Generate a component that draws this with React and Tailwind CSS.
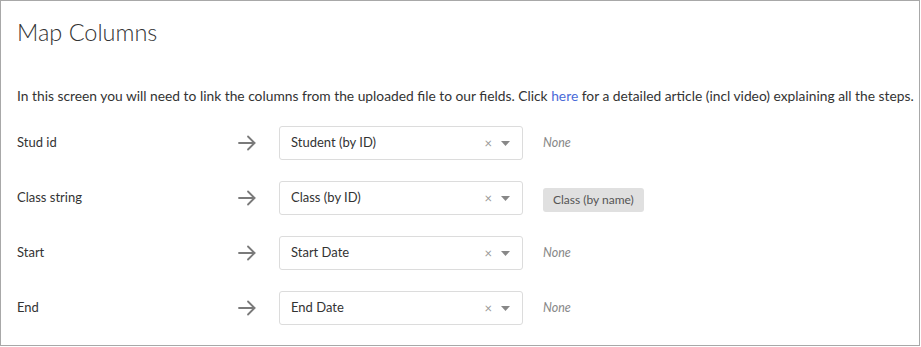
import React from "react";

const rows = [
  { label: "Stud id", value: "Student (by ID)", note: null },
  { label: "Class string", value: "Class (by ID)", note: "Class (by name)" },
  { label: "Start", value: "Start Date", note: null },
  { label: "End", value: "End Date", note: null },
];

function Arrow() {
  return (
    <svg width="18" height="16" viewBox="0 0 18 16" fill="none" stroke="#7a7a7a" strokeWidth="1.8" strokeLinecap="round" strokeLinejoin="round">
      <path d="M1 8h15.5" />
      <path d="M10 1.5 16.5 8 10 14.5" />
    </svg>
  );
}

export default function App() {
  return (
    <div
      className="w-[920px] h-[346px] border border-[#a8a8a8] bg-white pl-4 text-[#333]"
      style={{ fontFamily: "Lato, 'Open Sans', sans-serif" }}
    >
      <h1 className="pt-[17px] text-[23.5px] leading-[29px] font-light text-[#333]">Map Columns</h1>
      <p className="mt-[39px] whitespace-nowrap text-[13.8px] leading-[20px] text-[#333]">
        In this screen you will need to link the columns from the uploaded file to our fields. Click{" "}
        <a className="text-[#4a6bd8]">here</a> for a detailed article (incl video) explaining all the steps.
      </p>
      <div className="mt-[20px] flex flex-col gap-[21px]">
        {rows.map((r) => (
          <div key={r.label} className="flex items-center h-[34px]">
            <div className="w-[221px] text-[13px] text-[#333]">{r.label}</div>
            <div className="w-[41px] flex items-center">
              <Arrow />
            </div>
            <div className="w-[244px] h-[34px] border border-[#dcdcdc] rounded-[3px] flex items-center pl-[11px] pr-[12px]">
              <span className="flex-1 text-[13px] text-[#333]">{r.value}</span>
              <span className="text-[#999] text-[13px] leading-none mr-[9px]">×</span>
              <svg width="9" height="5" viewBox="0 0 9 5">
                <path d="M0 0h9L4.5 5z" fill="#888" />
              </svg>
            </div>
            <div className="ml-[20px] flex items-center">
              {r.note ? (
                <span className="mt-1 inline-block bg-[#e0e0e0] rounded-[3px] px-[10px] h-[24px] leading-[24px] text-[12px] text-[#555]">
                  {r.note}
                </span>
              ) : (
                <span className="italic text-[12.5px] leading-[16px] text-[#888]">None</span>
              )}
            </div>
          </div>
        ))}
      </div>
    </div>
  );
}
